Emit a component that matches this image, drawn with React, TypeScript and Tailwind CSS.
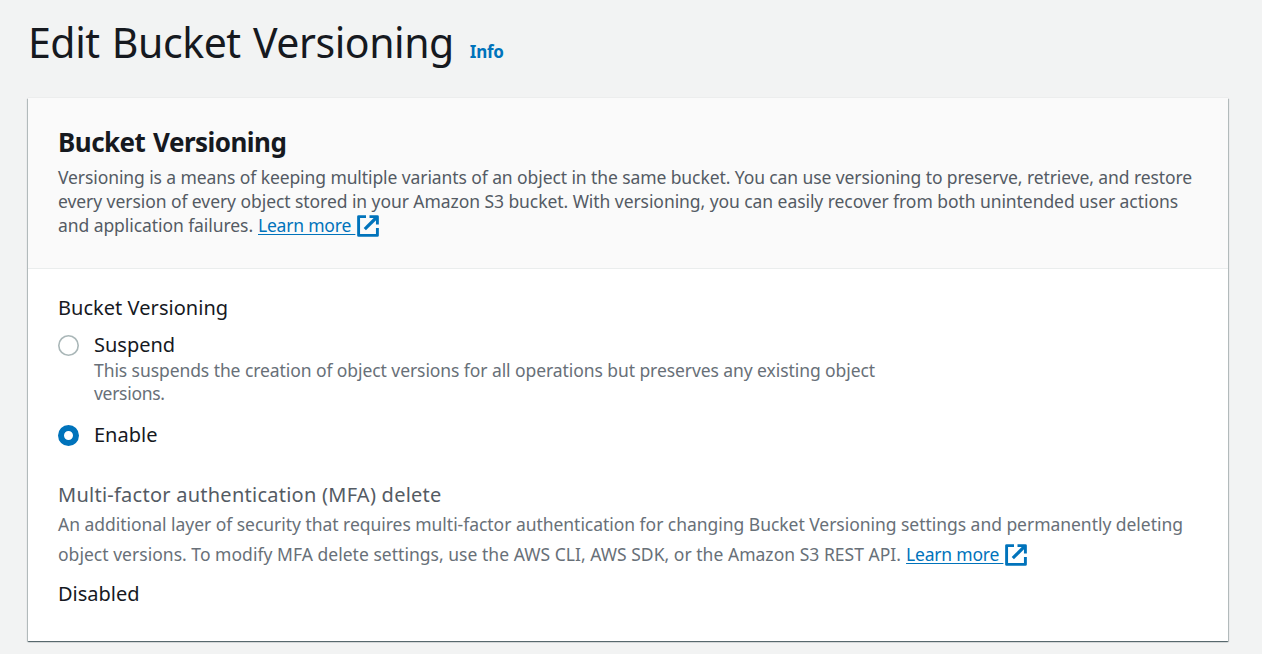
import type { ReactNode } from "react";

function ExternalIcon() {
  return (
    <svg className="relative top-px ml-[2px] h-[22px] w-[22px] shrink-0" viewBox="0 0 22 22" fill="none" stroke="#0073bb" strokeWidth="2.9">
      <path d="M9 1.6H1.6V20.4H20.4V13" strokeLinejoin="round" />
      <path d="M12.5 1.6H20.4V9.5" strokeLinejoin="round" />
      <path d="M20 2L7.8 14.2" strokeWidth="3.2" />
    </svg>
  );
}

function LearnMore() {
  return (
    <a href="#" className="ml-[5px] inline-flex h-full items-center text-[#0073bb]">
      <span className="whitespace-pre tracking-[-0.21px] underline decoration-1 underline-offset-[2px] [text-decoration-skip-ink:none]">{"Learn more "}</span>
      <ExternalIcon />
    </a>
  );
}

function Radio({ checked }: { checked?: boolean }) {
  return checked ? (
    <span className="mt-[5px] h-[21px] w-[21px] shrink-0 rounded-full border-[6px] border-[#0073bb] bg-white" />
  ) : (
    <svg className="mt-[5px] h-[21px] w-[21px] shrink-0" viewBox="0 0 21 21">
      <circle cx="10.5" cy="10.5" r="9.7" fill="#fff" stroke="#aab7b8" strokeWidth="1.6" />
    </svg>
  );
}

function Option({ label, checked, children }: { label: ReactNode; checked?: boolean; children?: ReactNode }) {
  return (
    <label className="flex gap-[15px]">
      <Radio checked={checked} />
      <span className="flex flex-col">
        <span className="text-xl leading-[30px]">{label}</span>
        {children}
      </span>
    </label>
  );
}

export default function App() {
  return (
    <main className="h-[654px] overflow-hidden bg-[#f2f3f3] pr-[34px] pl-7 font-['Noto_Sans','Open_Sans',sans-serif] whitespace-nowrap text-[#16191f]">
      <header className="flex h-[98px] items-baseline gap-4 pt-3">
        <h1 className="text-[41px] leading-[60px] tracking-[-0.44px] [word-spacing:2px]">Edit Bucket Versioning</h1>
        <a href="#" className="text-[17px] font-bold tracking-[-0.25px] text-[#0073bb]">Info</a>
      </header>

      <section className="h-[543px] bg-white shadow-[0_1px_1px_0_rgba(0,28,36,0.45),0_0_1px_0_rgba(0,28,36,0.15),1px_1px_1px_0_rgba(0,28,36,0.18),-1px_1px_1px_0_rgba(0,28,36,0.18)]">
        <div className="h-[171px] border-b border-[#eaeded] bg-[#fafafa] px-[30px] pt-7">
          <h2 className="text-[26px] leading-8 font-bold tracking-[-0.53px] [word-spacing:1.5px]">Bucket Versioning</h2>
          <div className="mt-[7px] text-[17.5px] leading-6 text-[#545b64]">
            <p className="tracking-[-0.093px]">
              Versioning is a means of keeping multiple variants of an object in the same bucket. You can use versioning to preserve, retrieve, and restore
            </p>
            <p className="tracking-[-0.065px]">
              every version of every object stored in your Amazon S3 bucket. With versioning, you can easily recover from both unintended user actions
            </p>
            <p className="flex h-6 items-center tracking-[-0.073px]">
              and application failures.
              <LearnMore />
            </p>
          </div>
        </div>

        <div className="px-[30px] pt-6">
          <h3 className="text-xl leading-[30px] tracking-[0.04px]">Bucket Versioning</h3>
          <div className="mt-[7px] flex flex-col gap-[15px]">
            <Option label="Suspend">
              <span className="-mt-px flex flex-col text-[17.5px] leading-[23px] text-[#687078]">
                <span className="tracking-[-0.077px]">
                  This suspends the creation of object versions for all operations but preserves any existing object
                </span>
                <span className="tracking-[-0.3px]">versions.</span>
              </span>
            </Option>
            <Option label="Enable" checked />
          </div>

          <h3 className="mt-[30px] text-xl leading-[30px] tracking-[0.25px] text-[#545b64]">
            Multi-factor authentication (MFA) delete
          </h3>
          <div className="-mt-px text-[17.5px] leading-[30px] text-[#687078]">
            <p className="tracking-[-0.036px]">
              An additional layer of security that requires multi-factor authentication for changing Bucket Versioning settings and permanently deleting
            </p>
            <p className="flex h-[30px] items-center tracking-[0.027px]">
              object versions. To modify MFA delete settings, use the AWS CLI, AWS SDK, or the Amazon S3 REST API.
              <LearnMore />
            </p>
          </div>
          <p className="mt-[10px] text-xl leading-[30px]">Disabled</p>
        </div>
      </section>
    </main>
  );
}
